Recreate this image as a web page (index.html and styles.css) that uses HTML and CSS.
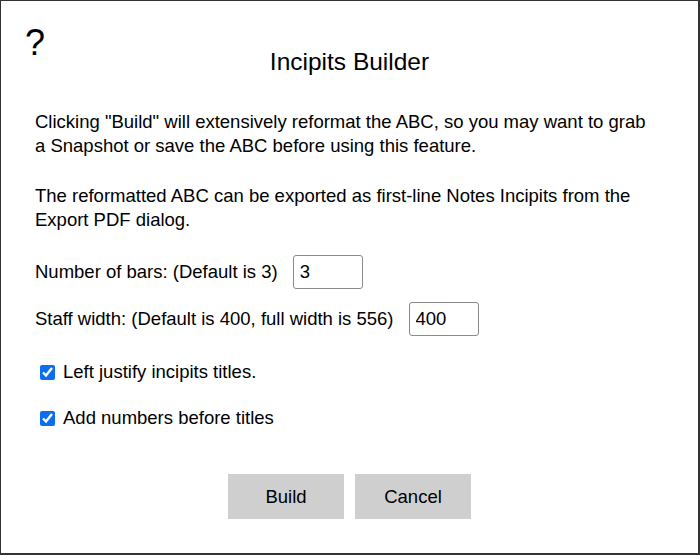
FILE: index.html
```html
<!DOCTYPE html>
<html>
<head>
<meta charset="utf-8">
<link rel="stylesheet" href="styles.css">
</head>
<body>
<div class="dialog">
  <div class="help">?</div>
  <h1 class="title">Incipits Builder</h1>
  <p class="para first">Clicking "Build" will extensively reformat the ABC, so you may want to grab a Snapshot or save the ABC before using this feature.</p>
  <p class="para second">The reformatted ABC can be exported as first-line Notes Incipits from the Export PDF dialog.</p>
  <div class="field bars">
    <label class="field-label">Number of bars: (Default is 3)</label>
    <input class="num-input" type="text" value="3">
  </div>
  <div class="field staff">
    <label class="field-label">Staff width: (Default is 400, full width is 556)</label>
    <input class="num-input" type="text" value="400">
  </div>
  <label class="check justify"><input type="checkbox" checked class="cb"><span>Left justify incipits titles.</span></label>
  <label class="check numbers"><input type="checkbox" checked class="cb"><span>Add numbers before titles</span></label>
  <div class="buttons">
    <button class="btn">Build</button>
    <button class="btn">Cancel</button>
  </div>
</div>
</body>
</html>
```
FILE: styles.css
```css
html, body {
  margin: 0;
  padding: 0;
  background: #fff;
}
.dialog {
  position: relative;
  width: 700px;
  height: 555px;
  box-sizing: border-box;
  border-style: solid;
  border-color: #333;
  border-width: 1px 2px 2px 1px;
  padding: 0 34px;
  font-family: "Liberation Sans", Arial, sans-serif;
  color: #000;
  display: flex;
  flex-direction: column;
}
.help {
  position: absolute;
  left: 24px;
  top: 20px;
  font-size: 36px;
  line-height: 44px;
}
.title {
  margin: 46px 0 0;
  font-size: 24.5px;
  font-weight: normal;
  line-height: 30px;
  text-align: center;
}
.para {
  margin: 0;
  max-width: 622px;
  font-size: 18.5px;
  line-height: 24px;
}
.first { margin-top: 33px; }
.second { margin-top: 26px; }
.field {
  display: flex;
  align-items: center;
  font-size: 18.5px;
  gap: 15px;
}
.bars { margin-top: 23px; }
.staff { margin-top: 13px; }
.num-input {
  width: 70px;
  height: 34px;
  box-sizing: border-box;
  border: 1px solid #8a8a8a;
  border-radius: 3px;
  padding: 0 6px;
  font-family: "Liberation Sans", Arial, sans-serif;
  font-size: 18.5px;
  color: #000;
  margin: 0;
}
.check {
  display: flex;
  align-items: center;
  font-size: 18.5px;
  line-height: 24px;
  gap: 8px;
  padding-left: 5px;
}
.justify { margin-top: 24px; }
.numbers { margin-top: 22px; }
.cb {
  width: 15px;
  height: 15px;
  margin: 0;
  accent-color: #0b6ef0;
}
.buttons {
  display: flex;
  justify-content: center;
  gap: 11px;
  margin-top: 44px;
}
.btn {
  width: 116px;
  height: 45px;
  border: none;
  background: #cfcfcf;
  font-family: "Liberation Sans", Arial, sans-serif;
  font-size: 18.5px;
  color: #000;
  padding: 0;
  margin: 0;
}
```
